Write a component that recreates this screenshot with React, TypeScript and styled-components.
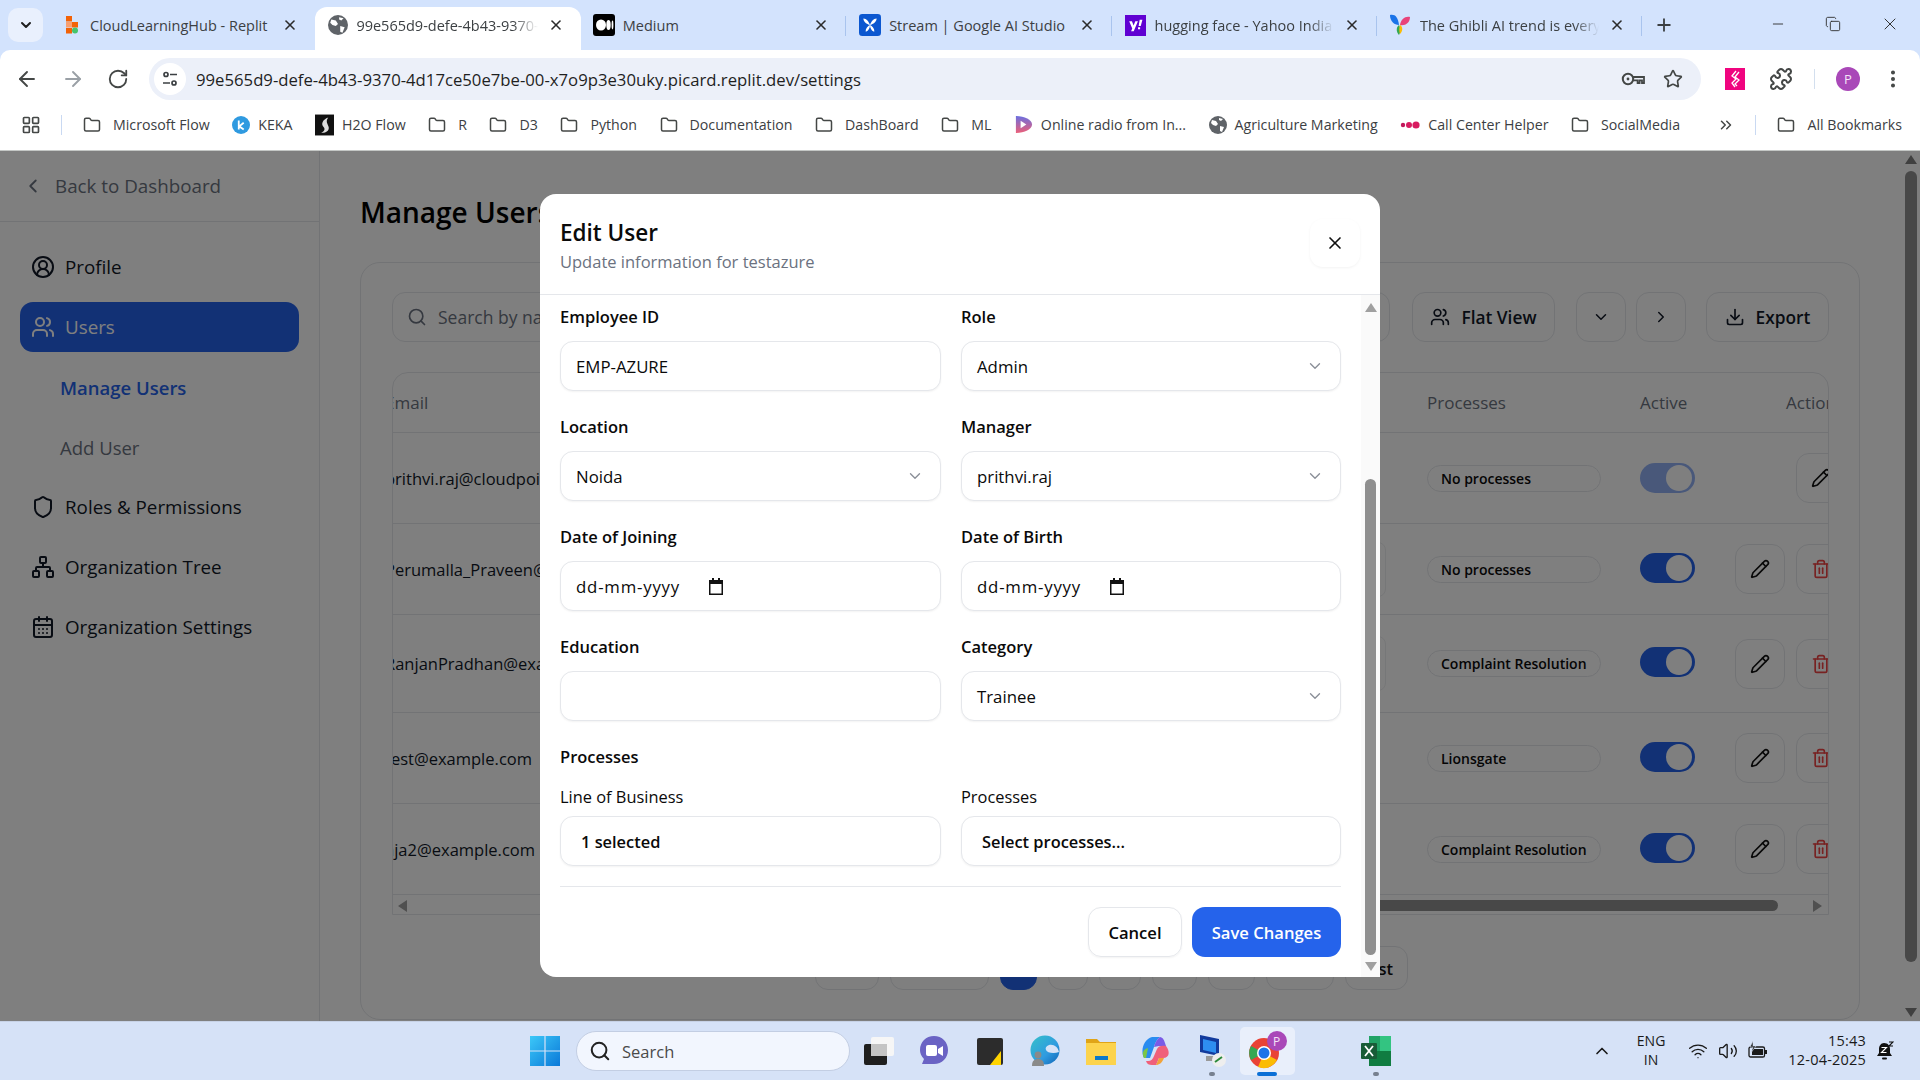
import React from 'react';
import styled, { createGlobalStyle } from 'styled-components';
import {
  ArrowLeft, ArrowRight, RotateCw, Star, Puzzle, EllipsisVertical, Plus, Minus, X, Copy,
  LayoutGrid, Folder, ChevronsRight, ChevronUp, ChevronDown, ChevronRight, ChevronLeft, Wifi, Volume2,
  Search as SearchIcon, CircleUserRound, Users, Shield, Network, CalendarDays, Download,
  Pencil, Trash2,
} from 'lucide-react';

const UI = `"Open Sans", "Noto Sans", "Liberation Sans", sans-serif`;

const Global = createGlobalStyle`
  html, body { margin: 0; padding: 0; width: 1920px; height: 1080px; overflow: hidden; background: #fff; }
  * { box-sizing: border-box; }
  #root { width: 1920px; height: 1080px; font-family: ${UI}; }
`;

const Screen = styled.div`display: flex; flex-direction: column; width: 1920px; height: 1080px;`;

/* ---------- tab strip ---------- */
const TabStrip = styled.div`
  display: flex; align-items: flex-end; height: 50px; background: #d3e3fd; padding-left: 8px; flex: none;
`;
const TabMenu = styled.div`
  width: 35px; height: 34px; margin: 0 7px 8px 0; border-radius: 10px; background: #e9f0fd;
  display: flex; align-items: center; justify-content: center; color: #1f1f1f; flex: none;
`;
const Tab = styled.div<{ $active?: boolean; $sep?: boolean }>`
  position: relative; width: 265.4px; height: 43px; flex: none; display: flex; align-items: center;
  padding: 0 17px 7px 12px; border-radius: 12px 12px 0 0; background: ${p => (p.$active ? '#fff' : 'transparent')};
  ${p => p.$sep && `&::after { content: ''; position: absolute; right: 0; top: 9px; height: 20px; width: 1px; background: #a9c4ee; }`}
`;
const TabIcon = styled.span<{ $w: number }>`width: ${p => p.$w}px; height: 22px; display: flex; align-items: center; justify-content: center; flex: none;`;
const TabTitle = styled.span<{ $fade?: boolean }>`
  flex: 1; margin-left: 8px; font-size: 14.5px; color: #3c4043; white-space: nowrap; overflow: hidden;
  ${p => p.$fade && `margin-right: 10px; -webkit-mask-image: linear-gradient(90deg, #000 86%, transparent); mask-image: linear-gradient(90deg, #000 86%, transparent);`}
`;
const TabClose = styled.span`display: flex; flex: none; color: #2b2b2b;`;
const NewTab = styled.span`display: flex; margin: 0 0 15px 12px; color: #3c4043;`;
const WindowControls = styled.div`
  margin-left: auto; display: flex; align-items: center; gap: 39px; padding: 0 20px 2px 0; color: #333; height: 50px;
`;

/* ---------- address bar ---------- */
const Toolbar = styled.div`height: 50px; flex: none; background: #d3e3fd;`;
const ToolbarInner = styled.div`
  height: 50px; background: #fff; border-radius: 10px 10px 0 0; display: flex; align-items: flex-end; padding-left: 15px;
`;
const NavIcons = styled.div`display: flex; gap: 22px; height: 42px; align-items: center; color: #444746;`;
const UrlBar = styled.div`
  margin-left: 20px; width: 1552px; height: 42px; border-radius: 21px; background: #ecf0f9; display: flex; align-items: center;
  padding: 0 18px 0 5px;
`;
const TuneCircle = styled.span`
  width: 32px; height: 32px; border-radius: 50%; background: #fff; display: flex; align-items: center; justify-content: center; flex: none;
`;
const UrlText = styled.span`margin-left: 10px; font-size: 16.72px; color: #1f1f1f; white-space: nowrap; flex: 1;`;
const UrlIcons = styled.span`display: flex; gap: 18px; align-items: center; color: #444746;`;
const ToolIcons = styled.div`display: flex; align-items: center; height: 42px; margin-left: 24px; color: #444746;`;
const PuzzleSlot = styled.span`display: flex; margin-left: 24px;`;
const ToolSep = styled.span`width: 1px; height: 20px; background: #d3dfee; margin: 0 21px 0 21px;`;
const Avatar = styled.span`
  width: 24px; height: 24px; border-radius: 50%; background: #a948b8; color: #f4e3f7; font-size: 13px;
  display: flex; align-items: center; justify-content: center; margin-right: 22px;
`;

/* ---------- bookmarks ---------- */
const BookmarkBar = styled.div`
  height: 51px; flex: none; background: #fff; border-bottom: 1px solid #c4c7c5; display: flex; align-items: center;
  padding: 0 0 1px 21px; color: #444746;
`;
const BarSep = styled.span`width: 1px; height: 20px; background: #c9d9f2; margin: 0 21px 0 20px; flex: none;`;
const Bookmark = styled.span<{ $tight?: boolean; $last?: boolean }>`
  display: inline-flex; align-items: center; gap: ${p => (p.$tight ? 8 : 12)}px; margin-right: ${p => (p.$last ? 0 : 22.5)}px; white-space: nowrap; flex: none;
`;
const BookmarkLabel = styled.span`font-size: 14.2px; color: #3c4043;`;
const BookmarkEnd = styled.div`margin-left: auto; display: flex; align-items: center; padding-right: 18px;`;

/* ---------- page ---------- */
const Page = styled.div`position: relative; flex: 1; display: flex; overflow: hidden; background: #fff; min-height: 0;`;
const Dim = styled.div`position: absolute; inset: 0; background: rgba(0,0,0,.5);`;
const Sidebar = styled.aside`width: 320px; flex: none; border-right: 1px solid #e5e7eb; display: flex; flex-direction: column;`;
const BackRow = styled.div`
  height: 71px; flex: none; border-bottom: 1px solid #e5e7eb; display: flex; align-items: center; gap: 11px; padding: 0 0 0 22px;
  color: #6b7280; font-size: 18.8px;
`;
const NavList = styled.nav`display: flex; flex-direction: column; gap: 10px; padding: 20px 20px 0;`;
const NavItem = styled.div<{ $active?: boolean }>`
  height: 50px; display: flex; align-items: center; gap: 10px; padding-left: 11px; border-radius: 13px;
  font-size: 18.8px; color: ${p => (p.$active ? '#fff' : '#111827')}; background: ${p => (p.$active ? '#2563eb' : 'transparent')};
`;
const SubItem = styled.div<{ $active?: boolean }>`
  height: 50px; display: flex; align-items: center; padding-left: 40px; font-size: 18.5px;
  font-weight: ${p => (p.$active ? 600 : 400)}; color: ${p => (p.$active ? '#2563eb' : '#6b7280')};
`;

const Main = styled.main`flex: 1; min-width: 0; padding: 40px 45px 0 40px; display: flex; flex-direction: column;`;
const PageTitle = styled.h1`margin: 0 0 29px; font-size: 28px; font-weight: 600; line-height: 42px; color: #000; white-space: nowrap;`;
const Card = styled.section`
  height: 758px; flex: none; border: 1px solid #e5e7eb; border-radius: 20px; padding: 29px 30px 0 31px; display: flex; flex-direction: column;
`;
const FilterBar = styled.div`display: flex; align-items: center; height: 50px; flex: none;`;
const SearchBox = styled.div`
  flex: 1; height: 50px; border: 1px solid #e5e7eb; border-radius: 13px; display: flex; align-items: center; gap: 11px; padding-left: 14px;
  font-size: 17.5px; color: #6b7280; margin-right: 22px; white-space: nowrap;
`;
const ToolButton = styled.div<{ $w: number; $gap?: number }>`
  width: ${p => p.$w}px; height: 50px; margin-left: ${p => p.$gap ?? 0}px; border: 1px solid #e5e7eb; border-radius: 13px; flex: none;
  display: flex; align-items: center; justify-content: center; gap: 11px; font-size: 17.3px; font-weight: 600; color: #111827;
`;
const TableBox = styled.div`
  margin-top: 30px; height: 543px; flex: none; border: 1px solid #e5e7eb; border-radius: 16px 16px 0 0; overflow: hidden; position: relative;
`;
const HeadRow = styled.div`
  height: 60px; display: flex; align-items: center; border-bottom: 1px solid #e5e7eb; margin-left: -8px; font-size: 17px; font-weight: 500; color: #6b7280;
`;
const Row = styled.div<{ $h: number }>`
  height: ${p => p.$h}px; display: flex; align-items: center; border-bottom: 1px solid #e5e7eb; margin-left: -8px; width: calc(100% + 8px);
`;
const EmailCell = styled.div`
  width: 1042px; flex: none; display: flex; align-items: center; justify-content: space-between; padding-right: 41px;
  font-size: 16.5px; color: #111827; white-space: nowrap; overflow: hidden;
`;
const GhostBox = styled.span`width: 40px; height: 55px; border: 1px solid #edeef0; border-radius: 8px; flex: none;`;
const ProcCell = styled.div`width: 213px; flex: none;`;
const ActiveCell = styled.div`width: 95px; flex: none; display: flex;`;
const HeadText = styled.span<{ $w: number }>`width: ${p => p.$w}px; flex: none; white-space: nowrap;`;
const Chip = styled.span`
  display: flex; align-items: center; width: 174px; height: 27px; border: 1px solid #e5e7eb; border-radius: 14px; padding-left: 13px;
  font-size: 14px; font-weight: 600; color: #0a0a0a; white-space: nowrap;
`;
const Toggle = styled.span<{ $off?: boolean }>`
  width: 55px; height: 30px; border-radius: 15px; display: flex; align-items: center; justify-content: flex-end; padding-right: 3px;
  background: ${p => (p.$off ? '#92b1f5' : '#2563eb')};
  ${p => !p.$off && 'margin-top: -3px;'}
`;
const Knob = styled.span`width: 26px; height: 26px; border-radius: 50%; background: #fff;`;
const ActionButtons = styled.div<{ $solo?: boolean }>`
  display: flex; gap: 11px; flex: none; ${p => p.$solo && 'margin-left: 61px;'}
`;
const IconButton = styled.span<{ $red?: boolean }>`
  width: 50px; height: 50px; flex: none; border: 1px solid #e5e7eb; border-radius: 13px; display: flex; align-items: center; justify-content: center;
  color: ${p => (p.$red ? '#ef4444' : '#111')};
`;
const HScroll = styled.div`
  position: absolute; left: 0; right: 0; bottom: 0; height: 16px; display: flex; align-items: center; justify-content: space-between; padding: 0 6px 0 5px;
`;
const HThumb = styled.span`position: absolute; left: 550px; right: 50px; top: 2px; height: 11px; border-radius: 6px; background: #909090;`;
const Arrow = styled.span<{ $dir: 'l' | 'r' | 'u' | 'd'; $c?: string }>`
  width: 0; height: 0; flex: none;
  ${p => p.$dir === 'l' && `border-top: 6px solid transparent; border-bottom: 6px solid transparent; border-right: 9px solid ${p.$c ?? '#a0a0a0'};`}
  ${p => p.$dir === 'r' && `border-top: 6px solid transparent; border-bottom: 6px solid transparent; border-left: 9px solid ${p.$c ?? '#a0a0a0'};`}
  ${p => p.$dir === 'u' && `border-left: 6px solid transparent; border-right: 6px solid transparent; border-bottom: 9px solid ${p.$c ?? '#a0a0a0'};`}
  ${p => p.$dir === 'd' && `border-left: 6px solid transparent; border-right: 6px solid transparent; border-top: 9px solid ${p.$c ?? '#a0a0a0'};`}
`;
const Pager = styled.div`display: flex; gap: 11px; margin: 31px 0 0 423px;`;
const PageBtn = styled.span<{ $w: number; $on?: boolean }>`
  width: ${p => p.$w}px; height: 44px; flex: none; border: 1px solid ${p => (p.$on ? '#2563eb' : '#e5e7eb')}; border-radius: 13px;
  background: ${p => (p.$on ? '#2563eb' : 'transparent')}; font-size: 16.5px; font-weight: 600; color: #111;
  display: flex; align-items: center; justify-content: center;
`;
const PageScroll = styled.div`width: 15px; flex: none; display: flex; flex-direction: column; align-items: center; padding: 4px 3px 4px 0;`;
const PageThumb = styled.span`width: 12px; flex: 1; border-radius: 6px; background: #909090; margin: 7px 0 46px;`;

/* ---------- modal ---------- */
const Modal = styled.div`
  position: absolute; left: 540px; top: 43px; width: 840px; height: 783px; background: #fff; border-radius: 16px 16px 0 16px; display: flex; flex-direction: column; overflow: hidden;
`;
const ModalHead = styled.header`
  height: 101px; flex: none; border-bottom: 1px solid #e5e7eb; display: flex; justify-content: space-between; padding: 22px 20px 0;
`;
const ModalTitle = styled.h2`margin: 0; font-size: 22.5px; font-weight: 600; line-height: 34px; color: #0a0a0a;`;
const ModalSub = styled.p`margin: 0; font-size: 16.5px; line-height: 24px; color: #6b7280;`;
const CloseBtn = styled.span`
  width: 50px; height: 48px; border-radius: 13px; display: flex; align-items: center; justify-content: center; color: #111;
  box-shadow: 0 1px 3px rgba(0,0,0,.05); margin-top: 3px;
`;
const ModalBody = styled.div`flex: 1; display: flex; min-height: 0;`;
const FormArea = styled.div`width: 821px; flex: none; padding: 9px 0 0 20px;`;
const FormGrid = styled.div`display: grid; grid-template-columns: 381px 380px; column-gap: 20px; row-gap: 23px;`;
const Field = styled.div`display: flex; flex-direction: column;`;
const Label = styled.label`font-size: 16.5px; line-height: 26px; font-weight: 600; color: #0a0a0a; height: 26px; margin-bottom: 11px;`;
const Control = styled.div<{ $strong?: boolean }>`
  height: 50px; border: 1px solid #e5e7eb; border-radius: 13px; background: #fff; display: flex; align-items: center; justify-content: space-between;
  padding: 0 16px 0 ${p => (p.$strong ? 20 : 15)}px; font-size: ${p => (p.$strong ? 16.4 : 16.8)}px; color: #0a0a0a; box-shadow: 0 1px 2px rgba(0,0,0,.05);
  font-weight: ${p => (p.$strong ? 600 : 400)};
`;
const DateText = styled.span`display: flex; align-items: center; gap: 29px; letter-spacing: .8px; padding-top: 1px;`;
const SectionTitle = styled.div`font-size: 16.5px; font-weight: 600; line-height: 26px; color: #0a0a0a; margin: 23px 0 14px;`;
const SubLabel = styled.div`font-size: 16.4px; line-height: 26px; color: #0a0a0a; margin-bottom: 6px;`;
const Footer = styled.div`
  width: 781px; border-top: 1px solid #e5e7eb; margin-top: 20px; padding-top: 20px; display: flex; justify-content: flex-end; gap: 10px;
`;
const CancelBtn = styled.span`
  width: 94px; height: 50px; border: 1px solid #e5e7eb; border-radius: 13px; display: flex; align-items: center; justify-content: center;
  font-size: 16.6px; font-weight: 600; color: #0a0a0a; box-shadow: 0 1px 2px rgba(0,0,0,.05);
`;
const SaveBtn = styled.span`
  width: 149px; height: 50px; border-radius: 13px; background: #2563eb; display: flex; align-items: center; justify-content: center;
  font-size: 16.6px; font-weight: 600; color: #fff;
`;
const ModalScroll = styled.div`width: 19px; flex: none; background: #fafafa; display: flex; flex-direction: column; align-items: center; padding: 8px 0 6px 0;`;
const ModalThumb = styled.span`width: 11px; flex: 1; background: #8f8f8f; border-radius: 6px; margin: 167px 0 7px;`;

/* ---------- taskbar ---------- */
const Taskbar = styled.footer`
  height: 59px; flex: none; background: #d6e2f7; border-top: 1px solid #c7d2e6; display: flex; align-items: center; padding-left: 530px; position: relative;
`;
const SearchPill = styled.div`
  width: 274px; height: 40px; margin: 0 1px 0 16px; border-radius: 20px; background: #f2f6fe; border: 1px solid #c3cee3; display: flex; align-items: center; gap: 11px;
  padding-left: 12px; font-size: 16.5px; color: #4a4a4a; flex: none;
`;
const TaskSlot = styled.span<{ $tile?: boolean }>`
  position: relative; width: 55.5px; height: 48px; flex: none; display: flex; align-items: center; justify-content: center; border-radius: 5px;
  background: ${p => (p.$tile ? '#e9effb' : 'transparent')};
`;
const RunDot = styled.span<{ $wide?: boolean }>`
  position: absolute; bottom: -1px; left: 50%; transform: translateX(-50%); height: 4px; border-radius: 2px;
  width: ${p => (p.$wide ? 20 : 6)}px; background: ${p => (p.$wide ? '#0b6fd6' : '#77808f')};
`;
const TaskGap = styled.span`width: 53px; flex: none;`;
const Tray = styled.div`position: absolute; right: 0; top: 0; bottom: 0; display: flex; align-items: center; color: #1a1a1a;`;
const Lang = styled.div`font-size: 14px; line-height: 19px; text-align: center; margin: -3px 23px 0 25px; color: #1a1a1a;`;
const TrayIcons = styled.div`display: flex; gap: 10px; align-items: center;`;
const Clock = styled.div`font-size: 14.5px; line-height: 19px; text-align: right; margin: -3px 0 0 20px; color: #1a1a1a; letter-spacing: .2px;`;
const BellWrap = styled.span`display: flex; margin: 0 26px 0 10px;`;

/* ---------- drawings ---------- */
const FolderI = () => <Folder size={18} strokeWidth={2} color="#444746" />;
const Globe = ({ s = 18 }: { s?: number }) => (
  <svg width={s} height={s} viewBox="0 0 18 18"><circle cx="9" cy="9" r="9" fill="#5f6368" /><path d="M3 4l4 1 2 3-2 2-3-1-2-2zM11 10l4 1-2 5-2-1z M10 2l4 1-2 2-2-1z" fill="#fff" /></svg>
);
const ReplitIcon = () => (
  <svg width="14" height="20" viewBox="0 0 14 20"><rect x="1" y="1" width="6" height="5.5" fill="#f26207" /><rect x="1" y="7" width="6" height="5.5" fill="#f7a072" /><rect x="1" y="13" width="6" height="5.5" fill="#f26207" /><rect x="7" y="7" width="6" height="5.5" fill="#f26207" /><circle cx="10" cy="15.5" r="3" fill="#46c46c" /></svg>
);
const MediumIcon = () => (
  <svg width="22" height="22" viewBox="0 0 22 22"><rect width="22" height="22" rx="3" fill="#000" /><ellipse cx="8" cy="11" rx="5" ry="5.6" fill="#fff" /><ellipse cx="15.500" cy="11" rx="2.200" ry="5" fill="#fff" /><ellipse cx="19.500" cy="11" rx=".9" ry="4.400" fill="#fff" /></svg>
);
const StudioIcon = () => (
  <svg width="22" height="22" viewBox="0 0 20 20"><rect width="20" height="20" rx="3" fill="#0b57d0" /><path d="M4 4c3 0 5 3 6 6-3-1-6-3-6-6zM16 4c-3 0-5 3-6 6 3-1 6-3 6-6zM6 16c0-3 2-5 4-6 0 3-2 6-4 6zM14 16c0-3-2-5-4-6 0 3 2 6 4 6z" fill="#fff" /></svg>
);
const YahooIcon = () => (
  <svg width="21" height="21" viewBox="0 0 20 20"><rect width="20" height="20" fill="#6001d2" /><path d="M4 6h2.6l1.6 4 1.6-4h2.5l-4 9.500H5.800l1.100-2.600zM14 4.500h2.600L15 10.500h-2zM12.400 11.600h2v2h-2z" fill="#fff" /></svg>
);
const GeminiLikeIcon = () => (
  <svg width="22" height="22" viewBox="0 0 22 22"><path d="M1 1c5-1 8 2 9 10-5 0-9-4-9-10z" fill="#1a73e8" /><path d="M21 3c-5-1-9 2-10 8 5 1 10-2 10-8z" fill="#e8437a" /><path d="M10 11c-3 2-3 7 0 10 2-3 2-7 0-10z" fill="#34a853" /><path d="M11 11c3 2 3 6 0 9-1-3-1-6 0-9z" fill="#fbbc04" /></svg>
);
const Tune = () => (
  <svg width="18" height="18" viewBox="0 0 18 18" fill="none" stroke="#3c4043" strokeWidth="1.7"><circle cx="5" cy="4.500" r="2" /><path d="M9 4.500h7M2 13h7" /><circle cx="13" cy="13" r="2" /></svg>
);
const KeyIcon = () => (
  <svg width="24" height="22" viewBox="0 0 24 22" fill="none" stroke="#444746" strokeWidth="2"><circle cx="7" cy="11" r="5.200" /><circle cx="7" cy="11" r="1.400" fill="#444746" stroke="none" /><path d="M12 9h11v6h-2v-2.600h-2.400V15h-2v-2.600H12" strokeWidth="1.800" /></svg>
);
const ExtIcon = () => (
  <svg width="20" height="22" viewBox="0 0 20 22"><rect width="20" height="22" fill="#f0047f" /><path d="M11 3l-4 5 4 3-4 4 3 4M14 4l-4 5 4 3-4 4 2 2" fill="none" stroke="#fff" strokeWidth="1.300" /></svg>
);
const Keka = () => (
  <svg width="18" height="18" viewBox="0 0 20 20"><circle cx="10" cy="10" r="10" fill="#2f9ae0" /><path d="M7.500 5v10M13 7.500l-5 4 5 3.500" fill="none" stroke="#fff" strokeWidth="2" /></svg>
);
const H2O = () => (
  <svg width="19" height="22" viewBox="0 0 20 22"><rect width="20" height="22" fill="#111" /><path d="M14 3C8 5 6 10 9 13c2 2 1 5-3 6 6 1 10-3 8-7-1-3-3-5 0-9z" fill="#ddd" /></svg>
);
const Radio = () => (
  <svg width="19" height="19" viewBox="0 0 20 20"><defs><linearGradient id="rad" x1="0" y1="0" x2="0" y2="1"><stop offset="0" stopColor="#6a6fe0" /><stop offset="1" stopColor="#ec5f78" /></linearGradient></defs><path d="M2 1c9 0 17 4 17 9s-8 9-17 9z" fill="url(#rad)" /><path d="M7 6l6 4-6 4z" fill="#fff" /></svg>
);
const CallDots = () => (
  <svg width="20" height="10" viewBox="0 0 20 10"><circle cx="3" cy="5" r="2.200" fill="#c2185b" /><circle cx="9" cy="5" r="3" fill="#d81b60" /><circle cx="16" cy="5" r="3.600" fill="#d81b60" /></svg>
);
const WinLogo = () => (
  <svg width="30" height="30" viewBox="0 0 30 30"><defs><linearGradient id="win" x1="0" y1="0" x2="1" y2="1"><stop offset="0" stopColor="#3cc8f8" /><stop offset="1" stopColor="#0a78d8" /></linearGradient></defs><path d="M0 0h14.400v14.400H0zM15.600 0H30v14.400H15.600zM0 15.600h14.400V30H0zM15.600 15.600H30V30H15.600z" fill="url(#win)" /></svg>
);
const TaskView = () => (
  <svg width="30" height="28" viewBox="0 0 30 28"><rect x="7" y="0" width="23" height="19" rx="2" fill="#f6f6f6" /><rect x="0" y="7" width="23" height="21" rx="2" fill="#1f1f1f" /><rect x="7" y="7" width="16" height="12" fill="#c4c4c4" /></svg>
);
const Meet = () => (
  <svg width="30" height="32" viewBox="0 0 30 32"><path d="M15 1c8 0 14 6 14 14s-6 14-14 14H3l2-5C2 21 1 18 1 15 1 7 7 1 15 1z" fill="#6a63c4" /><rect x="7" y="10" width="11" height="11" rx="2" fill="#fff" /><path d="M19 14l5-3v10l-5-3z" fill="#fff" /></svg>
);
const Sticky = () => (
  <svg width="26" height="27" viewBox="0 0 26 27"><rect width="26" height="27" rx="2" fill="#2c2c2c" /><path d="M13 27l11-14v14z" fill="#ffd400" /></svg>
);
const Edge = () => (
  <svg width="30" height="32" viewBox="0 0 30 32"><defs><linearGradient id="edg" x1="0" y1="0" x2="1" y2="1"><stop offset="0" stopColor="#35c1c9" /><stop offset=".6" stopColor="#2f9be0" /><stop offset="1" stopColor="#0f63b5" /></linearGradient></defs><circle cx="15" cy="15" r="14.500" fill="url(#edg)" /><path d="M29 17c-1-5-5-8-10-7-3 1-4 3-3 5 1 3 8 4 13 2z" fill="#d6e2f7" /><circle cx="8" cy="20" r="3.400" fill="#8a8a8a" /><path d="M2 31c0-5 2-7 6-7s6 2 6 7z" fill="#8a8a8a" /></svg>
);
const Files = () => (
  <svg width="30" height="28" viewBox="0 0 30 28"><path d="M0 2h11l3 3h16v23H0z" fill="#e0a417" /><rect y="6" width="30" height="22" fill="#fcd34d" /><rect x="9" y="19" width="13" height="4" fill="#0b78c9" /></svg>
);
const CopilotI = () => (
  <svg width="30" height="30" viewBox="0 0 30 30"><path d="M11 1h8c-3 2-5 6-6 10L9 22H3C-1 14 3 3 11 1z" fill="#2a8cf0" /><path d="M3 22c-3-6 0-9 4-10l-2 10z" fill="#7bc648" /><path d="M19 1c2 0 4 2 5 6l1 3h-7l-5 1c1-4 3-8 6-10z" fill="#7a5be6" /><path d="M25 10c4 5 4 12-3 12h-4l-3 7h-4c-3 0-5-1-6-4h2c3 0 5-2 6-5l3-7c1-3 5-4 9-3z" fill="#f0607a" /><path d="M18 22l-3 7c3 0 6-2 8-7z" fill="#f2a33a" /></svg>
);
const Rdp = () => (
  <svg width="30" height="34" viewBox="0 0 30 34"><path d="M3 1l19 4v17L3 18z" fill="#123a9c" /><path d="M6 5l13 3v11L6 16z" fill="#2e8ef0" /><rect x="9" y="22" width="9" height="5" fill="#999" /><circle cx="22" cy="26" r="7" fill="#eee" /><path d="M18 28l7-5" stroke="#2a8a3a" strokeWidth="2" /></svg>
);
const ChromeI = () => (
  <svg width="38" height="40" viewBox="0 0 38 40"><circle cx="16" cy="22" r="15" fill="#e94235" /><path d="M16 22l13 7A15 15 0 0 1 10 36z" fill="#fbbc04" /><path d="M16 22L3 29A15 15 0 0 1 3 15z" fill="#34a853" /><circle cx="16" cy="22" r="7" fill="#fff" /><circle cx="16" cy="22" r="5.500" fill="#1a73e8" /></svg>
);
const BadgeP = styled.span`
  position: absolute; left: 27px; top: 4px; width: 20px; height: 20px; border-radius: 50%; background: #a948b8; color: #f4e3f7; font-size: 12px;
  display: flex; align-items: center; justify-content: center;
`;
const Excel = () => (
  <svg width="30" height="30" viewBox="0 0 30 30"><path d="M8 0h22v30H8z" fill="#21a366" /><path d="M19 0h11v15H19z" fill="#33c481" /><path d="M8 15h22v15H8z" fill="#107c41" /><rect y="7" width="16" height="16" rx="1" fill="#185c37" /><path d="M4 10l8 10M12 10L4 20" stroke="#fff" strokeWidth="1.800" /></svg>
);
const Bell = () => (
  <svg width="18" height="20" viewBox="0 0 18 20"><path d="M8 2c4 0 6 3 6 6v4l2 3H1l2-3V8c0-3 2-6 5-6z" fill="#111" /><rect x="6" y="16.500" width="5" height="2" rx="1" fill="#111" /><path d="M5.500 6.500h5l-5 5h5" stroke="#fff" fill="none" strokeWidth="1.100" /><path d="M13 1h4l-4 4h4" stroke="#111" fill="none" strokeWidth="1.100" /></svg>
);
const Battery = () => (
  <svg width="20" height="20" viewBox="0 0 20 20"><rect x="1" y="6" width="15.500" height="10" rx="1.600" fill="none" stroke="#1a1a1a" strokeWidth="1.300" /><rect x="4" y="8" width="11" height="6" fill="#1a1a1a" /><rect x="17" y="9" width="2" height="4" fill="#1a1a1a" /><path d="M5 0L2 6h3l-1.500 5L8 5H5z" fill="#1a1a1a" stroke="#d6e2f7" strokeWidth=".6" /></svg>
);
const DateGlyph = () => (
  <svg width="14" height="17" viewBox="0 0 14 17"><path d="M3 0h2v2h4V0h2v2h3v15H0V2h3z" fill="#111" /><rect x="1.500" y="6" width="11" height="9.500" fill="#fff" /></svg>
);

/* ---------- data ---------- */
const tabs = [
  { icon: <ReplitIcon />, w: 20, title: 'CloudLearningHub - Replit' },
  { icon: <Globe s={20} />, w: 21, title: '99e565d9-defe-4b43-9370-4d17ce50e7be', active: true, fade: true },
  { icon: <MediumIcon />, w: 22, title: 'Medium', sep: true },
  { icon: <StudioIcon />, w: 23, title: 'Stream | Google AI Studio', sep: true },
  { icon: <YahooIcon />, w: 23, title: 'hugging face - Yahoo India Search', fade: true, sep: true },
  { icon: <GeminiLikeIcon />, w: 23, title: 'The Ghibli AI trend is everywhere', fade: true, sep: true },
];
const bookmarks: { icon: React.ReactNode; label: string; tight?: boolean }[] = [
  { icon: <FolderI />, label: 'Microsoft Flow' },
  { icon: <Keka />, label: 'KEKA', tight: true },
  { icon: <H2O />, label: 'H2O Flow', tight: true },
  { icon: <FolderI />, label: 'R' },
  { icon: <FolderI />, label: 'D3' },
  { icon: <FolderI />, label: 'Python' },
  { icon: <FolderI />, label: 'Documentation' },
  { icon: <FolderI />, label: 'DashBoard' },
  { icon: <FolderI />, label: 'ML' },
  { icon: <Radio />, label: 'Online radio from In...', tight: true },
  { icon: <Globe />, label: 'Agriculture Marketing', tight: true },
  { icon: <CallDots />, label: 'Call Center Helper', tight: true },
  { icon: <FolderI />, label: 'SocialMedia' },
];
const rows = [
  { email: 'prithvi.raj@cloudpoint.com', proc: 'No processes', h: 91, off: true, solo: true },
  { email: 'Perumalla_Praveen@example.com', proc: 'No processes', h: 91, ghost: true },
  { email: 'RanjanPradhan@example.com', proc: 'Complaint Resolution', h: 98, ghost: true },
  { email: 'test@example.com', proc: 'Lionsgate', h: 91 },
  { email: 'aja2@example.com', proc: 'Complaint Resolution', h: 91 },
];
const pages = [
  { w: 64, t: 'First' }, { w: 99, t: 'Previous' }, { w: 37, t: '1', on: true }, { w: 40, t: '2' }, { w: 42, t: '3' },
  { w: 45, t: '4' }, { w: 47, t: '5' }, { w: 68, t: 'Next' }, { w: 63, t: 'Last' },
];

const Chevron = () => <ChevronDown size={18} color="#8a8f98" strokeWidth={1.8} />;
const DateValue = () => (
  <DateText>dd-mm-yyyy<DateGlyph /></DateText>
);

export default function App() {
  return (
    <Screen>
      <Global />
      <TabStrip>
        <TabMenu><ChevronDown size={16} strokeWidth={3} /></TabMenu>
        {tabs.map(t => (
          <Tab key={t.title} $active={t.active} $sep={t.sep}>
            <TabIcon $w={t.w}>{t.icon}</TabIcon>
            <TabTitle $fade={t.fade}>{t.title}</TabTitle>
            <TabClose><X size={16} strokeWidth={2.4} /></TabClose>
          </Tab>
        ))}
        <NewTab><Plus size={20} strokeWidth={2.2} /></NewTab>
        <WindowControls>
          <Minus size={16} strokeWidth={1.4} />
          <Copy size={16} strokeWidth={1.4} />
          <X size={20} strokeWidth={1.2} />
        </WindowControls>
      </TabStrip>

      <Toolbar>
        <ToolbarInner>
          <NavIcons>
            <ArrowLeft size={24} strokeWidth={1.9} />
            <ArrowRight size={24} strokeWidth={1.9} color="#9aa0a6" />
            <RotateCw size={22} strokeWidth={2} />
          </NavIcons>
          <UrlBar>
            <TuneCircle><Tune /></TuneCircle>
            <UrlText>99e565d9-defe-4b43-9370-4d17ce50e7be-00-x7o9p3e30uky.picard.replit.dev/settings</UrlText>
            <UrlIcons>
              <KeyIcon />
              <Star size={20} strokeWidth={2} />
            </UrlIcons>
          </UrlBar>
          <ToolIcons>
            <ExtIcon />
            <PuzzleSlot><Puzzle size={24} strokeWidth={2} /></PuzzleSlot>
            <ToolSep />
            <Avatar>P</Avatar>
            <EllipsisVertical size={22} strokeWidth={2.4} />
          </ToolIcons>
        </ToolbarInner>
      </Toolbar>

      <BookmarkBar>
        <LayoutGrid size={20} strokeWidth={2} />
        <BarSep />
        {bookmarks.map(b => (
          <Bookmark key={b.label} $tight={b.tight}>
            {b.icon}
            <BookmarkLabel>{b.label}</BookmarkLabel>
          </Bookmark>
        ))}
        <BookmarkEnd>
          <ChevronsRight size={18} strokeWidth={2} />
          <BarSep />
          <Bookmark $last><FolderI /><BookmarkLabel>All Bookmarks</BookmarkLabel></Bookmark>
        </BookmarkEnd>
      </BookmarkBar>

      <Page>
        <Sidebar>
          <BackRow><ChevronLeft size={22} strokeWidth={2} />Back to Dashboard</BackRow>
          <NavList>
            <NavItem><CircleUserRound size={24} strokeWidth={2} />Profile</NavItem>
            <NavItem $active><Users size={24} strokeWidth={2} />Users</NavItem>
            <SubItem $active>Manage Users</SubItem>
            <SubItem>Add User</SubItem>
            <NavItem><Shield size={24} strokeWidth={2} />Roles &amp; Permissions</NavItem>
            <NavItem><Network size={24} strokeWidth={2} />Organization Tree</NavItem>
            <NavItem><CalendarDays size={24} strokeWidth={2} />Organization Settings</NavItem>
          </NavList>
        </Sidebar>
        <Main>
          <PageTitle>Manage Users</PageTitle>
          <Card>
            <FilterBar>
              <SearchBox><SearchIcon size={20} strokeWidth={2} />Search by name, email or ID</SearchBox>
              <ToolButton $w={143}><Users size={20} strokeWidth={2} />Flat View</ToolButton>
              <ToolButton $w={50} $gap={21}><ChevronDown size={18} /></ToolButton>
              <ToolButton $w={50} $gap={10}><ChevronRight size={18} /></ToolButton>
              <ToolButton $w={123} $gap={20}><Download size={20} strokeWidth={2} />Export</ToolButton>
            </FilterBar>
            <TableBox>
              <HeadRow>
                <HeadText $w={1042}>Email</HeadText>
                <HeadText $w={213}>Processes</HeadText>
                <HeadText $w={146}>Active</HeadText>
                <HeadText $w={80}>Actions</HeadText>
              </HeadRow>
              {rows.map(r => (
                <Row key={r.email} $h={r.h}>
                  <EmailCell>{r.email}{r.ghost && <GhostBox />}</EmailCell>
                  <ProcCell><Chip>{r.proc}</Chip></ProcCell>
                  <ActiveCell><Toggle $off={r.off}><Knob /></Toggle></ActiveCell>
                  <ActionButtons $solo={r.solo}>
                    <IconButton><Pencil size={20} strokeWidth={2} /></IconButton>
                    <IconButton $red><Trash2 size={20} strokeWidth={2} /></IconButton>
                  </ActionButtons>
                </Row>
              ))}
              <HScroll>
                <Arrow $dir="l" />
                <HThumb />
                <Arrow $dir="r" />
              </HScroll>
            </TableBox>
            <Pager>
              {pages.map(p => <PageBtn key={p.t} $w={p.w} $on={p.on}>{p.t}</PageBtn>)}
            </Pager>
          </Card>
        </Main>
        <PageScroll>
          <Arrow $dir="u" $c="#808080" />
          <PageThumb />
          <Arrow $dir="d" $c="#808080" />
        </PageScroll>

        <Dim />

        <Modal>
          <ModalHead>
            <div>
              <ModalTitle>Edit User</ModalTitle>
              <ModalSub>Update information for testazure</ModalSub>
            </div>
            <CloseBtn><X size={20} strokeWidth={2} /></CloseBtn>
          </ModalHead>
          <ModalBody>
            <FormArea>
              <FormGrid>
                <Field><Label>Employee ID</Label><Control>EMP-AZURE</Control></Field>
                <Field><Label>Role</Label><Control>Admin<Chevron /></Control></Field>
                <Field><Label>Location</Label><Control>Noida<Chevron /></Control></Field>
                <Field><Label>Manager</Label><Control>prithvi.raj<Chevron /></Control></Field>
                <Field><Label>Date of Joining</Label><Control><DateValue /></Control></Field>
                <Field><Label>Date of Birth</Label><Control><DateValue /></Control></Field>
                <Field><Label>Education</Label><Control /></Field>
                <Field><Label>Category</Label><Control>Trainee<Chevron /></Control></Field>
              </FormGrid>
              <SectionTitle>Processes</SectionTitle>
              <FormGrid>
                <Field><SubLabel>Line of Business</SubLabel><Control $strong>1 selected</Control></Field>
                <Field><SubLabel>Processes</SubLabel><Control $strong>Select processes...</Control></Field>
              </FormGrid>
              <Footer>
                <CancelBtn>Cancel</CancelBtn>
                <SaveBtn>Save Changes</SaveBtn>
              </Footer>
            </FormArea>
            <ModalScroll>
              <Arrow $dir="u" />
              <ModalThumb />
              <Arrow $dir="d" />
            </ModalScroll>
          </ModalBody>
        </Modal>
      </Page>

      <Taskbar>
        <WinLogo />
        <SearchPill><SearchIcon size={22} strokeWidth={2.2} color="#222" />Search</SearchPill>
        <TaskSlot><TaskView /></TaskSlot>
        <TaskSlot><Meet /></TaskSlot>
        <TaskSlot><Sticky /></TaskSlot>
        <TaskSlot><Edge /></TaskSlot>
        <TaskSlot><Files /></TaskSlot>
        <TaskSlot><CopilotI /></TaskSlot>
        <TaskSlot><Rdp /><RunDot /></TaskSlot>
        <TaskSlot $tile><ChromeI /><BadgeP>P</BadgeP><RunDot $wide /></TaskSlot>
        <TaskGap />
        <TaskSlot><Excel /><RunDot /></TaskSlot>
        <Tray>
          <ChevronUp size={20} strokeWidth={2} />
          <Lang>ENG<br />IN</Lang>
          <TrayIcons>
            <Wifi size={20} strokeWidth={1.6} />
            <Volume2 size={20} strokeWidth={1.6} />
            <Battery />
          </TrayIcons>
          <Clock>15:43<br />12-04-2025</Clock>
          <BellWrap><Bell /></BellWrap>
        </Tray>
      </Taskbar>
    </Screen>
  );
}
